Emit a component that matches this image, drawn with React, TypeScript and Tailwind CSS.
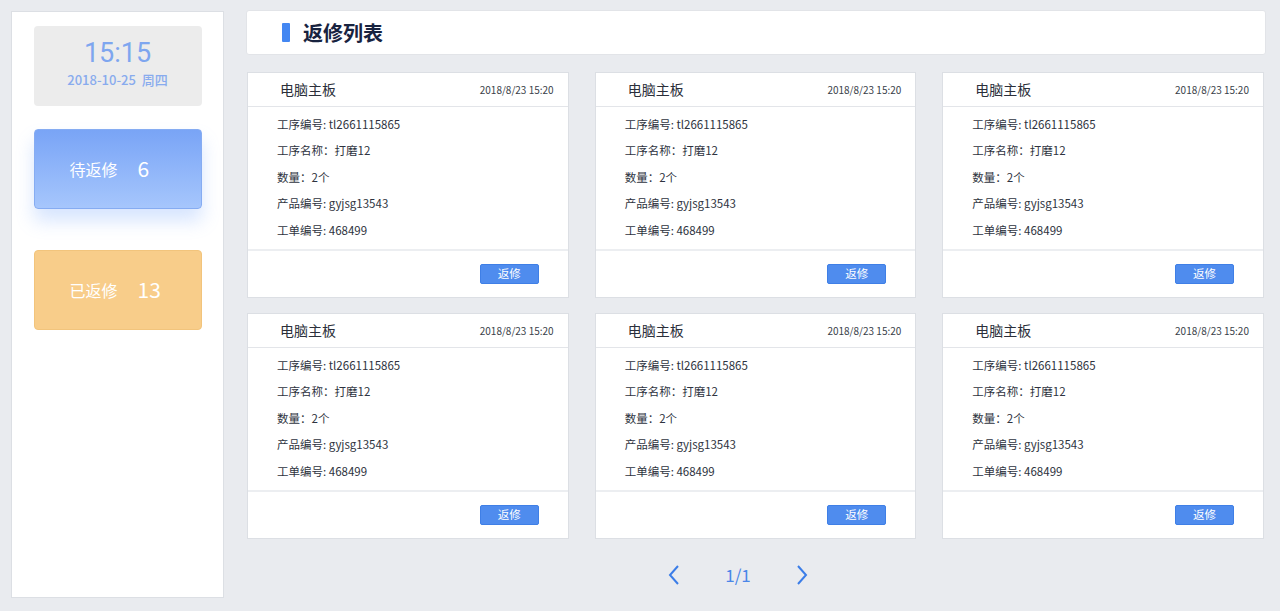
import React from "react";

const font = { fontFamily: '"Noto Sans CJK SC", "Noto Sans", sans-serif' };

function Card() {
  return (
    <div className="bg-white border border-[#dcdfe4] flex flex-col h-[226px]">
      <div className="h-[34px] border-b border-[#e3e5e9] flex items-center justify-between pl-[32px] pr-[14px]">
        <span className="text-[14px] text-[#2b2f3a]">电脑主板</span>
        <span className="text-[10px] text-[#3a3f4a]">2018/8/23 15:20</span>
      </div>
      <div className="flex flex-col pl-[29px] pt-[4px] text-[11.5px] text-[#2e3340] leading-[26.4px] h-[142px]">
        <div>工序编号: tl2661115865</div>
        <div>工序名称：打磨12</div>
        <div>数量：2个</div>
        <div>产品编号: gyjsg13543</div>
        <div>工单编号: 468499</div>
      </div>
      <div className="border-t-2 border-[#eceef1] flex-1 flex justify-end items-start pt-[13px] pr-[29px]">
        <button className="w-[59px] h-[20px] bg-[#4f8cee] border border-[#3f7fe6] rounded-[2px] text-white text-[11.5px] leading-none flex items-center justify-center">
          返修
        </button>
      </div>
    </div>
  );
}

export default function App() {
  return (
    <div className="w-[1280px] h-[611px] bg-[#e9ebef] flex" style={font}>
      <aside className="ml-[11px] mt-[11px] mb-[13px] w-[213px] bg-white border border-[#dcdfe4] flex flex-col items-center pt-[14px]">
        <div className="w-[168px] h-[80px] rounded-[4px] bg-[#ececec] flex flex-col items-center pt-[12px]">
          <div className="font-['Roboto',sans-serif] text-[27px] leading-[30px] text-[#7ea6ef]">15:15</div>
          <div className="text-[13px] leading-[18px] mt-[3px] text-[#88abee] font-medium">2018-10-25&nbsp;&nbsp;周四</div>
        </div>
        <div className="mt-[23px] w-[168px] h-[80px] rounded-[4px] border border-[#86acf2] bg-gradient-to-b from-[#79a4f6] to-[#a6c6fc] shadow-[0_12px_18px_rgba(110,160,250,0.28)] flex items-center pl-[35px] text-white">
          <span className="text-[16px] w-[49px]">待返修</span>
          <span className="text-[21px] ml-[19px]">6</span>
        </div>
        <div className="mt-[41px] w-[168px] h-[80px] rounded-[4px] border border-[#f2c47c] bg-[#f8cd8a] flex items-center pl-[35px] text-white">
          <span className="text-[16px] w-[49px]">已返修</span>
          <span className="text-[21px] ml-[19px]">13</span>
        </div>
      </aside>
      <main className="ml-[22px] w-[1020px] flex flex-col pt-[10px]">
        <div className="h-[45px] bg-white rounded-[3px] border border-[#e2e4e8] flex items-center pl-[35px]">
          <div className="w-[8px] h-[19px] bg-[#4487f2] rounded-[1px]" />
          <span className="ml-[13px] text-[20px] font-bold text-[#18233f]">返修列表</span>
        </div>
        <div className="mt-[17px] ml-[1px] w-[1017px] grid grid-cols-3 gap-x-[26px] gap-y-[15px]">
          {Array.from({ length: 6 }).map((_, i) => (
            <Card key={i} />
          ))}
        </div>
        <div className="mt-[23px] pr-[36px] flex items-center justify-center gap-[40px] text-[#4a86e8]">
          <svg width="14" height="22" viewBox="0 0 14 22" fill="none">
            <path d="M11 2 L3 11 L11 20" stroke="#3b7de8" strokeWidth="2" />
          </svg>
          <span className="text-[17px] px-[4px]">1/1</span>
          <svg width="14" height="22" viewBox="0 0 14 22" fill="none">
            <path d="M3 2 L11 11 L3 20" stroke="#3b7de8" strokeWidth="2" />
          </svg>
        </div>
      </main>
    </div>
  );
}
